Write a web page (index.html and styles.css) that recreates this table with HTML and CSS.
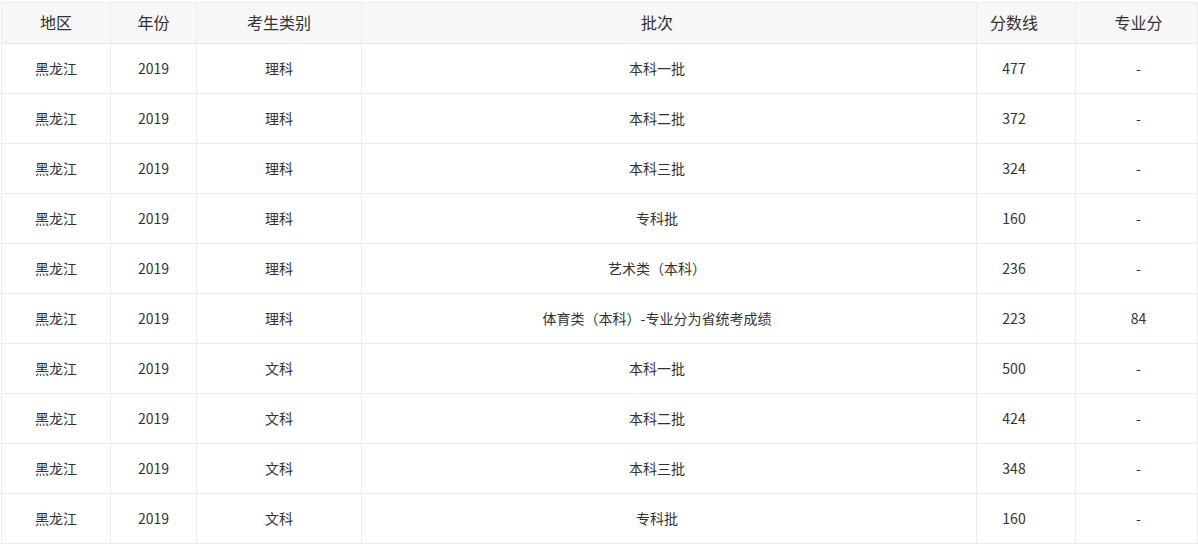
FILE: index.html
```html
<!DOCTYPE html>
<html lang="zh-CN">
<head>
<meta charset="utf-8">
<link rel="stylesheet" href="styles.css">
</head>
<body>
<div class="wrap">
<table class="score-table">
  <colgroup>
    <col class="c1"><col class="c2"><col class="c3"><col class="c4"><col class="c5"><col class="c6">
  </colgroup>
  <thead>
    <tr><th>地区</th><th>年份</th><th>考生类别</th><th>批次</th><th>分数线</th><th>专业分</th></tr>
  </thead>
  <tbody>
    <tr><td>黑龙江</td><td>2019</td><td>理科</td><td>本科一批</td><td>477</td><td>-</td></tr>
    <tr><td>黑龙江</td><td>2019</td><td>理科</td><td>本科二批</td><td>372</td><td>-</td></tr>
    <tr><td>黑龙江</td><td>2019</td><td>理科</td><td>本科三批</td><td>324</td><td>-</td></tr>
    <tr><td>黑龙江</td><td>2019</td><td>理科</td><td>专科批</td><td>160</td><td>-</td></tr>
    <tr><td>黑龙江</td><td>2019</td><td>理科</td><td>艺术类（本科）</td><td>236</td><td>-</td></tr>
    <tr><td>黑龙江</td><td>2019</td><td>理科</td><td>体育类（本科）-专业分为省统考成绩</td><td>223</td><td>84</td></tr>
    <tr><td>黑龙江</td><td>2019</td><td>文科</td><td>本科一批</td><td>500</td><td>-</td></tr>
    <tr><td>黑龙江</td><td>2019</td><td>文科</td><td>本科二批</td><td>424</td><td>-</td></tr>
    <tr><td>黑龙江</td><td>2019</td><td>文科</td><td>本科三批</td><td>348</td><td>-</td></tr>
    <tr><td>黑龙江</td><td>2019</td><td>文科</td><td>专科批</td><td>160</td><td>-</td></tr>
  </tbody>
</table>
</div>
</body>
</html>
```
FILE: styles.css
```css
html, body {
  margin: 0;
  padding: 0;
  background: #fff;
}
.wrap {
  padding: 2px 0 0 1px;
}
.score-table {
  border-collapse: collapse;
  table-layout: fixed;
  width: 1196px;
  font-family: "Microsoft YaHei", "Noto Sans CJK SC", "Noto Sans", sans-serif;
  color: #333;
}
.c1 { width: 109px; }
.c2 { width: 86px; }
.c3 { width: 165px; }
.c4 { width: 615px; }
.c5 { width: 99px; }
.c6 { width: 122px; }
.score-table th,
.score-table td {
  border: 1px solid #ebebeb;
  text-align: center;
  padding: 0 0 2px 0;
  vertical-align: middle;
}
.score-table th:nth-child(4),
.score-table td:nth-child(4),
.score-table th:nth-child(5),
.score-table td:nth-child(5) {
  padding-right: 24px;
}
.score-table th:nth-child(6),
.score-table td:nth-child(6) {
  padding-left: 4px;
}
.score-table th {
  background: #f7f7f7;
  font-weight: normal;
  font-size: 16px;
  height: 38px;
}
.score-table td {
  font-size: 14px;
  height: 47px;
}
```
